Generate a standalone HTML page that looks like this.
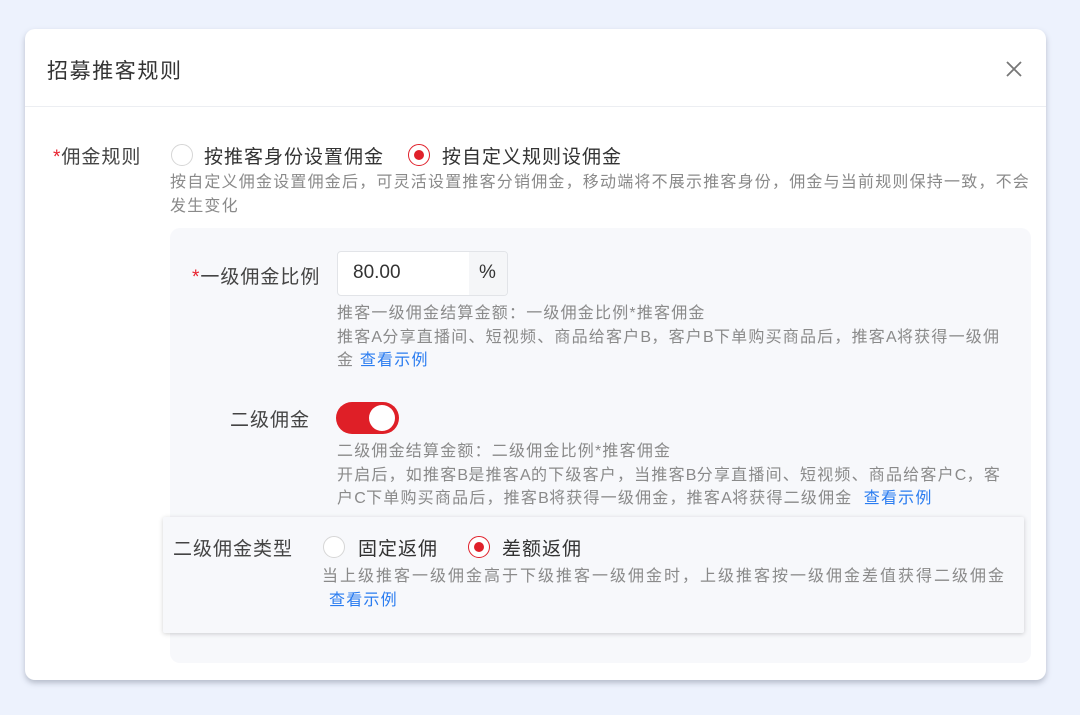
<!DOCTYPE html>
<html><head><meta charset="utf-8"><style>
*{margin:0;padding:0;box-sizing:border-box}
body{width:1080px;height:715px;background:#edf2fd;position:relative;overflow:hidden;font-family:"Liberation Sans","Noto Sans CJK SC",sans-serif;color:#333}
.a{position:absolute;white-space:nowrap}
.card{position:absolute;left:25px;top:29px;width:1021px;height:651px;background:#fff;border-radius:10px;box-shadow:0 3px 6px rgba(80,90,110,.35)}
.hl{position:absolute;left:0;top:77px;width:1021px;height:1px;background:#eceef2}
.t{font-size:21px;letter-spacing:1.6px;color:#333}
.l{font-size:19px;letter-spacing:1px;color:#444}
.h{font-size:16px;letter-spacing:1.2px;color:#8a8a8a;line-height:23.5px}
.h b{font-weight:normal;letter-spacing:0.3px}
.r{color:#e8222e}
.lk{color:#2a7cf0}
.rad{position:absolute;width:22px;height:22px;border-radius:50%;border:1px solid #d6d6d6;background:#fff}
.rad.on{border:1.5px solid #e0202a}
.rad.on::after{content:"";position:absolute;left:5px;top:5px;width:10px;height:10px;border-radius:50%;background:#e0202a}
</style></head><body>
<div class="card">
<div class="a t" style="left:22px;top:26px">招募推客规则</div>
<svg class="a" style="left:981px;top:32px" width="16" height="16"><path d="M1 1L15 15M15 1L1 15" stroke="#777" stroke-width="1.8"/></svg>
<div class="hl"></div>
<div class="a l" style="left:28px;top:113px"><span class="r">*</span>佣金规则</div>
<div class="rad" style="left:146px;top:115px"></div>
<div class="a l" style="left:179px;top:113px;color:#333">按推客身份设置佣金</div>
<div class="rad on" style="left:383px;top:115px"></div>
<div class="a l" style="left:417px;top:113px;color:#333">按自定义规则设佣金</div>
<div class="a h" style="left:145px;top:142px">按自定义佣金设置佣金后，可灵活设置推客分销佣金，移动端将不展示推客身份，佣金与当前规则保持一致，不会<br>发生变化</div>
<div class="a" style="left:145px;top:199px;width:861px;height:435px;background:#f7f8fb;border-radius:10px"></div>
<div class="a l" style="left:167px;top:233px"><span class="r">*</span>一级佣金比例</div>
<div class="a" style="left:312px;top:222px;width:171px;height:45px;border:1px solid #e2e4e8;border-radius:4px;background:#fff;overflow:hidden">
<div class="a" style="left:131px;top:0;width:40px;height:45px;background:#f5f6f8"></div>
<div class="a" style="left:15px;top:10px;font-size:19px;color:#333">80.00</div>
<div class="a" style="left:141px;top:10px;font-size:19px;color:#333">%</div></div>
<div class="a h" style="left:312px;top:273px">推客一级佣金结算金额：一级佣金比例*推客佣金<br>推客<b>A</b>分享直播间、短视频、商品给客户<b>B</b>，客户<b>B</b>下单购买商品后，推客<b>A</b>将获得一级佣<br>金 <span class="lk">查看示例</span></div>
<div class="a l" style="left:205px;top:376px">二级佣金</div>
<div class="a" style="left:311px;top:373px;width:63px;height:32px;border-radius:16px;background:#df1f27"><div class="a" style="left:33px;top:3px;width:26px;height:26px;border-radius:50%;background:#fff"></div></div>
<div class="a h" style="left:312px;top:411px">二级佣金结算金额：二级佣金比例*推客佣金<br>开启后，如推客<b>B</b>是推客<b>A</b>的下级客户，当推客<b>B</b>分享直播间、短视频、商品给客户<b>C</b>，客<br>户<b>C</b>下单购买商品后，推客<b>B</b>将获得一级佣金，推客<b>A</b>将获得二级佣金 &nbsp;<span class="lk">查看示例</span></div>
<div class="a" style="left:138px;top:488px;width:861px;height:116px;background:#f7f8fb;box-shadow:0 1px 5px rgba(0,0,0,.18);border-radius:2px"></div>
<div class="a l" style="left:148px;top:505px">二级佣金类型</div>
<div class="rad" style="left:298px;top:507px"></div>
<div class="a l" style="left:333px;top:505px;color:#333">固定返佣</div>
<div class="rad on" style="left:443px;top:507px"></div>
<div class="a l" style="left:477px;top:505px;color:#333">差额返佣</div>
<div class="a h" style="left:297px;top:536px;letter-spacing:2px">当上级推客一级佣金高于下级推客一级佣金时，上级推客按一级佣金差值获得二级佣金</div>
<div class="a h lk" style="left:304px;top:560px;color:#2a7cf0">查看示例</div>
</div>
</body></html>
